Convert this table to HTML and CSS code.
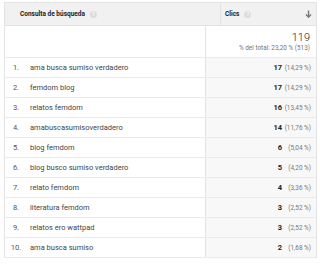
FILE: index.html
```html
<!DOCTYPE html>
<html lang="es">
<head>
<meta charset="utf-8">
<link rel="stylesheet" href="styles.css">
</head>
<body>
<div class="report">
  <div class="row head">
    <div class="q"><span class="title">Consulta de búsqueda</span><span class="help">?</span></div>
    <div class="v"><span class="title">Clics</span><span class="help">?</span>
      <svg class="sort" width="7" height="8" viewBox="0 0 7 8"><path d="M3.5 0.5V7" stroke="#777" stroke-width="1.4"/><path d="M1 4.5L3.5 7.2L6 4.5" fill="none" stroke="#777" stroke-width="1.3"/></svg>
    </div>
  </div>
  <div class="row summary">
    <div class="q"></div>
    <div class="v"><div class="total">119</div><div class="pct-total">% del total: 23,20 % (513)</div></div>
  </div>
  <div class="row item"><div class="q"><span class="idx">1.</span><span class="term">ama busca sumiso verdadero</span></div><div class="v"><b>17</b><span class="pct">(14,29 %)</span></div></div>
  <div class="row item"><div class="q"><span class="idx">2.</span><span class="term">femdom blog</span></div><div class="v"><b>17</b><span class="pct">(14,29 %)</span></div></div>
  <div class="row item"><div class="q"><span class="idx">3.</span><span class="term">relatos femdom</span></div><div class="v"><b>16</b><span class="pct">(13,45 %)</span></div></div>
  <div class="row item"><div class="q"><span class="idx">4.</span><span class="term">amabuscasumisoverdadero</span></div><div class="v"><b>14</b><span class="pct">(11,76 %)</span></div></div>
  <div class="row item"><div class="q"><span class="idx">5.</span><span class="term">blog femdom</span></div><div class="v"><b>6</b><span class="pct">(5,04 %)</span></div></div>
  <div class="row item"><div class="q"><span class="idx">6.</span><span class="term">blog busco sumiso verdadero</span></div><div class="v"><b>5</b><span class="pct">(4,20 %)</span></div></div>
  <div class="row item"><div class="q"><span class="idx">7.</span><span class="term">relato femdom</span></div><div class="v"><b>4</b><span class="pct">(3,36 %)</span></div></div>
  <div class="row item"><div class="q"><span class="idx">8.</span><span class="term">literatura femdom</span></div><div class="v"><b>3</b><span class="pct">(2,52 %)</span></div></div>
  <div class="row item"><div class="q"><span class="idx">9.</span><span class="term">relatos ero wattpad</span></div><div class="v"><b>3</b><span class="pct">(2,52 %)</span></div></div>
  <div class="row item"><div class="q"><span class="idx">10.</span><span class="term">ama busca sumiso</span></div><div class="v"><b>2</b><span class="pct">(1,68 %)</span></div></div>
</div>
</body>
</html>
```
FILE: styles.css
```css
html, body {
  margin: 0;
  padding: 0;
  background: #ffffff;
}
body {
  font-family: Roboto, "Liberation Sans", Arial, sans-serif;
  color: #333333;
}
.report {
  margin: 2px 3px 0 4px;
  border: 1px solid #e3e3e3;
  border-bottom: none;
}
.row {
  display: flex;
  border-bottom: 1px solid #ebebeb;
}
.q {
  flex: 0 0 200px;
  display: flex;
  align-items: center;
}
.v {
  flex: 1;
  border-left: 1px solid #e3e3e3;
  display: flex;
  align-items: center;
  justify-content: flex-end;
}
.head {
  height: 22px;
  background: #f1f1f1;
  border-bottom: 1px solid #e3e3e3;
}
.head .q {
  padding-left: 15px;
}
.head .v {
  justify-content: flex-start;
  padding-left: 4px;
  padding-right: 4px;
}
.title {
  font-size: 6.5px;
  font-weight: 700;
  color: #222222;
}
.help {
  display: inline-flex;
  align-items: center;
  justify-content: center;
  width: 7px;
  height: 7px;
  border-radius: 50%;
  background: #dcdcdc;
  color: #ffffff;
  font-size: 5px;
  font-weight: 700;
  margin-left: 5px;
}
.sort {
  margin-left: auto;
}
.summary {
  height: 31px;
}
.summary .v {
  flex-direction: column;
  align-items: flex-end;
  justify-content: flex-start;
  padding-right: 6px;
  padding-top: 6px;
  box-sizing: border-box;
}
.total {
  font-size: 11px;
  font-weight: 300;
  line-height: 11px;
  color: #222222;
}
.pct-total {
  font-size: 6.4px;
  color: #777777;
  margin-top: 1px;
}
.item {
  height: 19px;
}
.item .v {
  background: #f8f8f8;
  padding-right: 5px;
}
.idx {
  flex: 0 0 22px;
  text-align: center;
  font-size: 7.5px;
  color: #555555;
}
.term {
  padding-left: 3px;
  font-size: 7.5px;
  color: #444444;
}
.item b {
  font-size: 7.5px;
  font-weight: 700;
  color: #222222;
}
.pct {
  width: 29px;
  text-align: right;
  font-size: 6.4px;
  color: #777777;
}
```
